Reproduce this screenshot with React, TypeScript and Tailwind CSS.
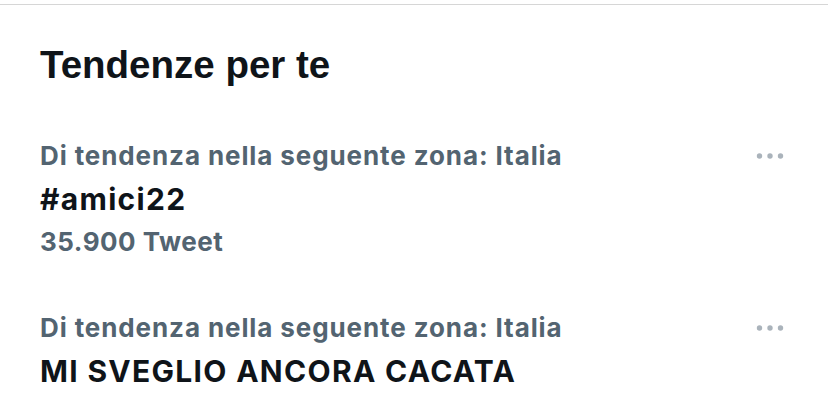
const trends = [
  { context: 'Di tendenza nella seguente zona: Italia', name: '#amici22', count: '35.900 Tweet' },
  { context: 'Di tendenza nella seguente zona: Italia', name: 'MI SVEGLIO ANCORA CACATA', count: null },
];

function MoreDots() {
  return (
    <svg width="28" height="8" viewBox="0 0 28 8" className="shrink-0">
      <circle cx="3.5" cy="4" r="2.7" fill="#aab3bb" />
      <circle cx="14" cy="4" r="2.7" fill="#aab3bb" />
      <circle cx="24.5" cy="4" r="2.7" fill="#aab3bb" />
    </svg>
  );
}

export default function App() {
  return (
    <div className="w-[828px] h-[412px] overflow-hidden bg-white font-['Inter',sans-serif]">
      <div className="h-[4px]" />
      <div className="h-px bg-[#d6d6d6]" />

      {/* Header */}
      <h1 className="mt-[38px] pl-[40px] text-[38.5px] leading-[44px] font-bold text-[#0f1419] font-['Liberation_Sans',Arial,sans-serif]">
        Tendenze per te
      </h1>

      {/* Trend list */}
      <div className="mt-[54px] flex flex-col gap-[56px]">
        {trends.map((t, i) => (
          <div key={i} className="pl-[40px] pr-[44px] flex flex-col">
            <div className="flex items-center justify-between">
              <span className="text-[26px] leading-[30px] font-bold tracking-[0.9px] text-[#536471]">{t.context}</span>
              <MoreDots />
            </div>
            <div className="mt-[10px] text-[30px] leading-[36px] font-bold tracking-[1.3px] text-[#0f1419]">{t.name}</div>
            {t.count && (
              <div className="mt-[10px] text-[26px] leading-[30px] font-bold tracking-[0.5px] text-[#536471]">{t.count}</div>
            )}
          </div>
        ))}
      </div>
    </div>
  );
}
